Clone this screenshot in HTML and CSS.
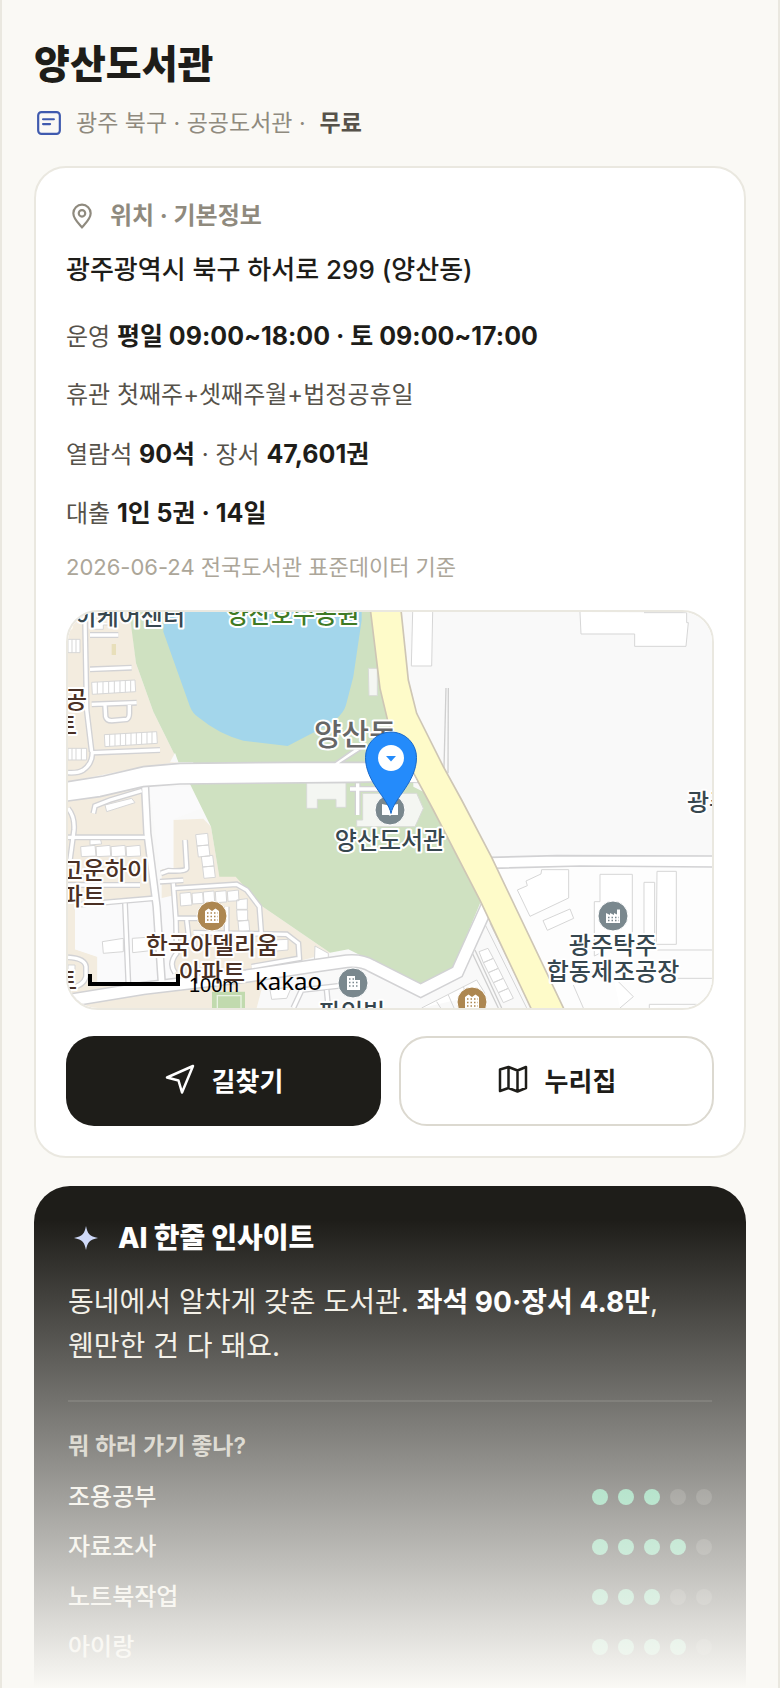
FILE: index.html
```
<!DOCTYPE html>
<html lang="ko">
<head>
<meta charset="utf-8">
<meta name="viewport" content="width=device-width, initial-scale=1">
<title>양산도서관</title>
<link rel="stylesheet" href="styles.css">
</head>
<body>
<main class="page">
  <header class="head">
    <h1 class="title">양산도서관</h1>
    <p class="meta">
      <svg class="meta-icon" viewBox="0 0 24 24" aria-hidden="true"><rect x="2" y="2" width="20" height="20" rx="3"/><path d="M6.500 8.500h10M6.500 13h6.500"/></svg>
      <span>광주 북구 · 공공도서관 ·</span>
      <strong>무료</strong>
    </p>
  </header>

  <section class="card">
    <h2 class="card-title">
      <svg class="pin-icon" viewBox="0 0 24 24" aria-hidden="true"><path d="M12 22.500C8 18 4 14.500 4 9.500a8 8 0 0 1 16 0c0 5-4 8.500-8 13z"/><circle cx="12" cy="9.500" r="3"/></svg>
      위치 · 기본정보
    </h2>
    <p class="address">광주광역시 북구 하서로 299 (양산동)</p>
    <div class="facts">
      <p>운영 <b>평일 09:00~18:00 · 토 09:00~17:00</b></p>
      <p>휴관 첫째주+셋째주월+법정공휴일</p>
      <p>열람석 <b>90석</b> · 장서 <b>47,601권</b></p>
      <p>대출 <b>1인 5권 · 14일</b></p>
    </div>
    <p class="source">2026-06-24 전국도서관 표준데이터 기준</p>

    <div class="map">
      <svg class="map-art" viewBox="0 0 644 396" preserveAspectRatio="xMidYMid slice" role="img" aria-label="양산도서관 주변 지도">
        <defs>
          <g id="lanes">
            <path d="M75 60L80 330L95 455M90 105H175M90 208L215 203M95 313L230 308M135 315L137 350Q140 362 155 362L200 358Q208 355 208 340V315M100 458L300 450M97 455Q98 490 70 510Q55 520 24 518"/>
            <path d="M245 572L150 600L105 618L100 640M24 625Q45 650 42 690L30 780M24 712H262M24 855H240M45 915L280 895M195 910L205 1150"/>
            <path d="M375 720L380 805Q378 815 325 812L303 820M300 845L370 841M340 850L348 960L350 1060Q325 1090 345 1118M345 865L530 853L560 870L598 920L604 1000M350 955H420M380 960L387 1020M500 920V1010M400 998L680 1003L715 1030L718 1075L575 1100M24 1072Q75 1075 78 1100V1130Q70 1160 24 1165"/>
            <path d="M893 550V645M870 567H960M700 1224L725 1170L860 1155M800 1170L805 1224"/>
          </g>
          <g id="avenues">
            <path d="M255 560L262 700L290 920L305 1145"/>
          </g>
          <path id="river-road" d="M10 1204L250 1165L560 1128L760 1098L860 1084Q905 1080 935 1098L1082 1172L1192 1116L1285 910"/>
        </defs>
        <rect width="644" height="396" fill="#f9f9f9"/>
        <g transform="translate(-8 -12) scale(.33333)">
          <path fill="#fdfdfd" d="M1290 770L1956 768V1224H1500z"/>
          <path fill="#f3ecdf" d="M24 36H210L228 190L280 335L355 487L250 500L24 545z"/>
          <path fill="#f3ecdf" d="M24 600L255 560L262 700L290 900L45 915V1048L112 1070V1150L305 1145L305 805H340V660L430 656L453 680L478 828H527L605 918L810 1058L620 1110L590 1224H24z"/>
          <path fill="#fafafb" d="M268 560H390L425 625L340 658V805L300 808zM45 915L280 900L345 885V1140L112 1150V1070L45 1048z"/>
          <path fill="#cfe1c1" d="M208 36H940L960 265L985 370L1060 500V560L1090 575L1120 630L1262 905L1180 1105L1082 1155L960 1095L865 1048L810 1058L605 918L527 830H478L453 680L390 552L400 487H355L280 335L228 190z"/>
          <path fill="#a3d6eb" d="M312 36L310 95L340 180L390 320Q398 340 415 352Q480 405 550 422L683 438L765 395Q845 360 858 315L880 230L905 60V36z"/>
          <path fill="#f9f9f9" d="M345 458L355 487H330z"/>
          <path class="block" d="M925 205H952V287H927zM740 548V625H772V598H828V622H858V548zM908 580H1070L1090 625L1065 680H890V660H908z"/>
          <path fill="#e8dfba" d="M155 132H168V165H155z"/>
          <g class="bld">
            <path d="M24 118H60V158H24zM36 118V158M48 118V158M95 247L225 240L227 275L97 283zM112 246V282M129 245V281M146 244V280M163 243V279M180 242V278M196 241V277M212 241V276M133 404L290 395L292 430L135 440zM149 403V439M165 402V438M181 401V437M197 400V436M213 399V435M229 398V434M245 397V433M261 396V432M276 395V431M24 445H80V480H24zM36 445V480M48 445V480M64 445V480M100 60V88H130V75H160"/>
            <path d="M62 740L105 736L108 768L64 770zM108 740L150 736L152 768L110 770zM153 740L195 736L197 768L155 770zM198 740L240 736L242 768L200 770zM90 710L120 712L125 732L90 735zM135 615L215 595L225 608L140 635z"/>
            <path d="M407 704L443 700L446 735L411 738zM411 738L446 735L450 768L415 771zM424 770L458 766L462 798L428 801zM428 801L462 798L466 832L432 835z"/>
            <path d="M360 880L392 877L396 915L362 918zM396 880L428 877L430 910L398 912zM430 876L462 873L464 908L432 910zM466 875L498 872L500 906L468 908zM502 874L535 870L537 902L504 904zM530 900L562 896V928H530zM530 930H563V962H532zM534 964L566 960L569 992L537 996zM127 1025L190 1015V1055L130 1060zM217 1015L290 1010V1050L218 1058zM765 1038L805 1060V1095H763zM640 1020L684 1018V1050L650 1053zM24 1095H45V1115H24z"/>
            <path d="M1058 36L1054 198H1115L1118 36M1560 36L1563 102H1724V139H1878L1885 68H1880V38H1752"/>
            <path d="M1445 809H1526V894L1410 949L1372 870L1402 857L1398 843L1443 822zM1449 962L1530 927L1541 955L1462 991zM1603 1068V905H1620V823H1717V1030M1603 1068L1700 1020M1752 847H1784V1035H1752zM1791 814H1849V1033H1789zM1790 1050H1956M1850 1135H1956M1660 1130L1720 1190L1680 1224M1540 1155L1570 1224M1768 1224V1213H1910"/>
            <path d="M1276 975L1400 1224M1290 970L1415 1224M1257 1055L1284 1045L1300 1075L1270 1088zM1270 1088L1300 1075L1315 1105L1285 1118zM1285 1118L1315 1105L1330 1135L1300 1148zM1300 1148L1330 1135L1345 1165L1315 1178zM1315 1178L1345 1165L1360 1195L1330 1208zM1085 1224L1250 1140L1275 1180M1130 1205L1142 1224M1165 1185L1182 1224M1210 1160L1225 1195M630 1170L695 1160L680 1195L635 1198z"/>
          </g>
          <path class="edge" d="M1235 1055L1315 1224M1245 1050L1325 1224M1158 264L1152 505M1165 264L1164 520"/>
          <path fill="#c1daae" d="M456 1175H555V1224H456z"/><path fill="none" stroke="#eaf3e3" stroke-width="4" d="M472 1224V1187H543V1224"/>
          <use class="case" href="#lanes"/>
          <use class="case case-wide" href="#avenues"/>
          <use class="case case-main" href="#river-road"/>
          <use class="lane" href="#lanes"/>
          <use class="lane lane-wide" href="#avenues"/>
          <path class="street" d="M10 547L130 528L250 500L360 490L700 487H825L885 445L905 448L845 487H1060L1100 548L1000 545L880 547L360 552L250 560L120 590L10 605z"/>
          <path class="street" d="M1290 772L1490 767L1970 768V801L1560 798L1300 805z"/>
          <use class="lane lane-main" href="#river-road"/>
          <path fill="#fefbc9" stroke="#cec6b5" stroke-width="5" d="M930 20L960 265L985 370L1045 490L1120 630L1262 905L1420 1240H1518L1295 772L1205 600L1150 500L1070 340L1045 240L1022 20z"/>
          <path fill="#fff" d="M1012 487L1042 490L1072 547L1012 544z"/>
        </g>

        <g class="label slate">
          <text x="117" y="13" text-anchor="end">아이케어센터</text>
          <text x="322" y="237" text-anchor="middle">양산도서관</text>
          <text x="545" y="342" text-anchor="middle">광주탁주</text>
          <text x="545" y="368" text-anchor="middle">합동제조공장</text>
          <text x="619" y="199">광주</text>
          <text x="284" y="409" text-anchor="middle">파인빌</text>
        </g>
        <g class="label brown">
          <text x="19" y="96" text-anchor="end">공</text>
          <text x="9" y="122" text-anchor="end">트</text>
          <text x="81" y="267" text-anchor="end">고운하이</text>
          <text x="37" y="293" text-anchor="end">파트</text>
          <text x="144" y="342" text-anchor="middle">한국아델리움</text>
          <text x="144" y="369" text-anchor="middle">아파트</text>
          <text x="9" y="377" text-anchor="end">트</text>
        </g>
        <text class="label park" x="225" y="11" text-anchor="middle">양산호수공원</text>
        <text class="label district" x="246" y="133">양산동</text>

        <g stroke="#fff" stroke-width="1">
          <circle cx="322" cy="198" r="15" fill="#7a888e"/>
          <circle cx="545" cy="304" r="15" fill="#7a888e"/>
          <circle cx="285" cy="371" r="15" fill="#7a888e"/>
          <circle cx="144" cy="304" r="15" fill="#ad8751"/>
          <circle cx="404" cy="390" r="15" fill="#ad8751"/>
        </g>
        <path fill="#fff" d="M314 192l7 1.500 1 1 1-1 7-1.500v11h-7l-1 1-1-1h-7z"/>
        <path fill="#fff" d="M137 311v-12l3.500-2.500 3.500 2.500 3.500-2.500 3.500 2.500v12z"/>
        <path stroke="#ad8751" stroke-width="1.500" stroke-dasharray="1.500 2" d="M139 301h11M139 304.500h11M139 308h11"/>
        <path fill="#fff" d="M397 397v-12l3.500-2.500 3.500 2.500 3.500-2.500 3.500 2.500v12z"/>
        <path stroke="#ad8751" stroke-width="1.500" stroke-dasharray="1.500 2" d="M399 387h11M399 390.500h11M399 394h11"/>
        <path fill="#fff" d="M279 378v-14h8v4h5v10z"/>
        <path stroke="#7a888e" stroke-width="1.500" stroke-dasharray="1.500 2" d="M281 367h5M281 370.500h10M281 374h10"/>
        <path fill="#fff" d="M538 311v-10l4 2v-2l4 2v-2l3 1.500v-5h3v13.500z"/>
        <path stroke="#7a888e" stroke-width="1.500" stroke-dasharray="1.500 2" d="M540 305.500h11M540 308.500h11"/>

        <path fill="#248bfb" stroke="#1768c9" d="M323 201.500C320 186 297.500 170 297.500 145.500a25.500 25.500 0 0 1 51 0C348.500 170 326 186 323 201.500z"/>
        <circle cx="323" cy="146" r="13" fill="#fff"/>
        <path fill="#248bfb" d="M318 144h10l-5 5.500z"/>

        <path fill="none" stroke="#000" stroke-width="4" d="M22 362v10h88v-10"/>
        <text class="scale" x="121" y="380">100m</text>
        <text class="brand" x="187" y="378">kakao</text>
      </svg>
    </div>

    <div class="actions">
      <button class="btn btn-dark" type="button">
        <svg class="btn-icon" viewBox="0 0 32 32" aria-hidden="true"><path d="M29 3L3 14.500l11.500 3L18 29.500z"/></svg>
        길찾기
      </button>
      <button class="btn btn-light" type="button">
        <svg class="btn-icon" viewBox="0 0 32 32" aria-hidden="true"><path d="M3 6.500L11.500 4l9 3.500L29 4v21l-8.500 3.500-9-3.500L3 28zM11.500 4v21M20.500 7.500v21"/></svg>
        누리집
      </button>
    </div>
  </section>

  <section class="insight">
    <h2 class="insight-title">
      <svg class="spark" viewBox="0 0 24 24" aria-hidden="true"><path d="M12 0c1.400 7.500 3.500 10.400 12 12-8.500 1.600-10.600 4.500-12 12-1.400-7.500-3.500-10.400-12-12C8.500 10.400 10.600 7.500 12 0z"/></svg>
      AI 한줄 인사이트
    </h2>
    <p class="insight-text">동네에서 알차게 갖춘 도서관. <b>좌석 90·장서 4.8만</b>, 웬만한 건 다 돼요.</p>
    <h3 class="fit-title">뭐 하러 가기 좋나?</h3>
    <ul class="fit">
      <li><span>조용공부</span><span class="dots"><i class="on"></i><i class="on"></i><i class="on"></i><i></i><i></i></span></li>
      <li><span>자료조사</span><span class="dots"><i class="on"></i><i class="on"></i><i class="on"></i><i class="on"></i><i></i></span></li>
      <li><span>노트북작업</span><span class="dots"><i class="on"></i><i class="on"></i><i class="on"></i><i></i><i></i></span></li>
      <li><span>아이랑</span><span class="dots"><i class="on"></i><i class="on"></i><i class="on"></i><i class="on"></i><i></i></span></li>
    </ul>
  </section>
  <div class="fade"></div>
</main>
</body>
</html>
```

FILE: styles.css
```
* { box-sizing: border-box; }

body {
  margin: 0;
  background: #faf9f5;
  color: #1e1d19;
  font-family: Inter, "Noto Sans CJK KR", sans-serif;
  word-break: keep-all;
}

h1, h2, h3, p, ul { margin: 0; padding: 0; }

.page {
  position: relative;
  min-height: 100vh;
  padding: 34px 32px 0;
  border: solid #eae8e0;
  border-width: 0 2px;
  background: #faf9f5;
}

.title {
  font-size: 39px;
  line-height: 60px;
  font-weight: 800;
}

.meta {
  display: flex;
  align-items: center;
  gap: 14px;
  margin: 11px 0 25px;
  font-size: 23px;
  line-height: 36px;
  color: #8f8a7e;
}

.meta strong { font-weight: 600; color: #56524a; }

.meta-icon {
  width: 26px;
  height: 26px;
  margin-left: 2px;
  fill: none;
  stroke: #3f5aae;
  stroke-width: 2;
  stroke-linecap: round;
}

.card {
  padding: 30px;
  border: 2px solid #eae8e0;
  border-radius: 32px;
  background: #fff;
}

.card-title {
  display: flex;
  align-items: center;
  gap: 15px;
  font-size: 24px;
  line-height: 36px;
  font-weight: 700;
  color: #8f8a7e;
}

.pin-icon {
  width: 26px;
  height: 26px;
  margin-left: 3px;
  fill: none;
  stroke: currentColor;
  stroke-width: 2;
}

.address {
  margin-top: 16px;
  font-size: 26px;
  line-height: 40px;
  font-weight: 500;
}

.facts {
  display: grid;
  gap: 19px;
  margin-top: 26px;
  font-size: 24px;
  line-height: 40px;
  color: #56524a;
}

.facts p { height: 40px; }
.facts b { font-size: 25px; font-weight: 700; color: #1e1d19; }

.source {
  margin-top: 18px;
  font-size: 22px;
  line-height: 32px;
  color: #aca699;
}

.map {
  height: 400px;
  margin: 27px 0 26px;
  overflow: hidden;
  border: 2px solid #eae8e0;
  border-radius: 32px;
}

.map-art { display: block; width: 100%; height: 100%; }

.block { fill: #f4f6f2; stroke: #d8dad6; stroke-width: 3; }
.bld { fill: #fff; stroke: #d6d6d6; stroke-width: 3; }
.edge { fill: none; stroke: #cfcfcf; stroke-width: 4; }
.case { fill: none; stroke: #d2d2d4; stroke-width: 18; }
.case-wide { stroke-width: 26; }
.case-main { stroke-width: 42; }
.lane { fill: none; stroke: #fff; stroke-width: 10; }
.lane-wide { stroke-width: 17; }
.lane-main { stroke-width: 33; }
.street { fill: #fff; stroke: #d2d2d4; stroke-width: 5; }

.label {
  font-family: "Noto Sans CJK KR", sans-serif;
  font-size: 24px;
  font-weight: 500;
  paint-order: stroke;
  stroke: #fff;
  stroke-width: 4px;
  stroke-linejoin: round;
}

.slate { fill: #37474f; }
.brown { fill: #4a3024; }
.park { fill: #3f7a24; }
.district { fill: #666; font-size: 30px; }
.scale { font-family: "Liberation Sans", Arial, sans-serif; font-size: 20px; }
.brand { font-family: "Noto Sans", sans-serif; font-size: 24px; }

.actions {
  display: grid;
  grid-template-columns: 1fr 1fr;
  gap: 18px;
}

.btn {
  display: flex;
  align-items: center;
  justify-content: center;
  gap: 16px;
  height: 90px;
  padding: 0 0 4px;
  border-radius: 28px;
  font-family: inherit;
  font-size: 26px;
  font-weight: 700;
}

.btn-dark { border: 0; background: #1e1d19; color: #fff; }
.btn-light { border: 2px solid #dcd9d0; background: #fff; color: #1e1d19; }

.btn-icon {
  width: 32px;
  height: 32px;
  fill: none;
  stroke: currentColor;
  stroke-width: 2.500;
  stroke-linejoin: round;
}

.insight {
  margin-top: 28px;
  padding: 32px 34px 23px;
  border-radius: 36px 36px 0 0;
  background: #1e1d19;
  color: #f1eee4;
}

.insight-title {
  display: flex;
  align-items: center;
  gap: 20px;
  font-size: 28px;
  line-height: 40px;
  font-weight: 800;
  color: #fff;
}

.spark { width: 24px; height: 24px; margin-left: 6px; fill: #cdd8f8; }

.insight-text {
  padding: 22px 0 32px;
  border-bottom: 2px solid #35342f;
  font-size: 28px;
  line-height: 44px;
}

.insight-text b { font-weight: 700; color: #fff; }

.fit-title {
  margin-top: 26px;
  font-size: 23px;
  line-height: 36px;
  font-weight: 600;
  color: #c4c0b4;
}

.fit {
  display: grid;
  gap: 14px;
  margin-top: 15px;
  list-style: none;
  font-size: 24px;
  line-height: 36px;
  font-weight: 500;
}

.fit li { display: flex; align-items: center; justify-content: space-between; }

.dots { display: flex; gap: 10px; }

.dots i {
  width: 16px;
  height: 16px;
  border-radius: 50%;
  background: #3f3e39;
}

.dots .on { background: #5bc795; }

.fade {
  position: absolute;
  inset: auto 0 0;
  height: 468px;
  background: linear-gradient(#faf9f500, #faf9f5);
  pointer-events: none;
}
```
